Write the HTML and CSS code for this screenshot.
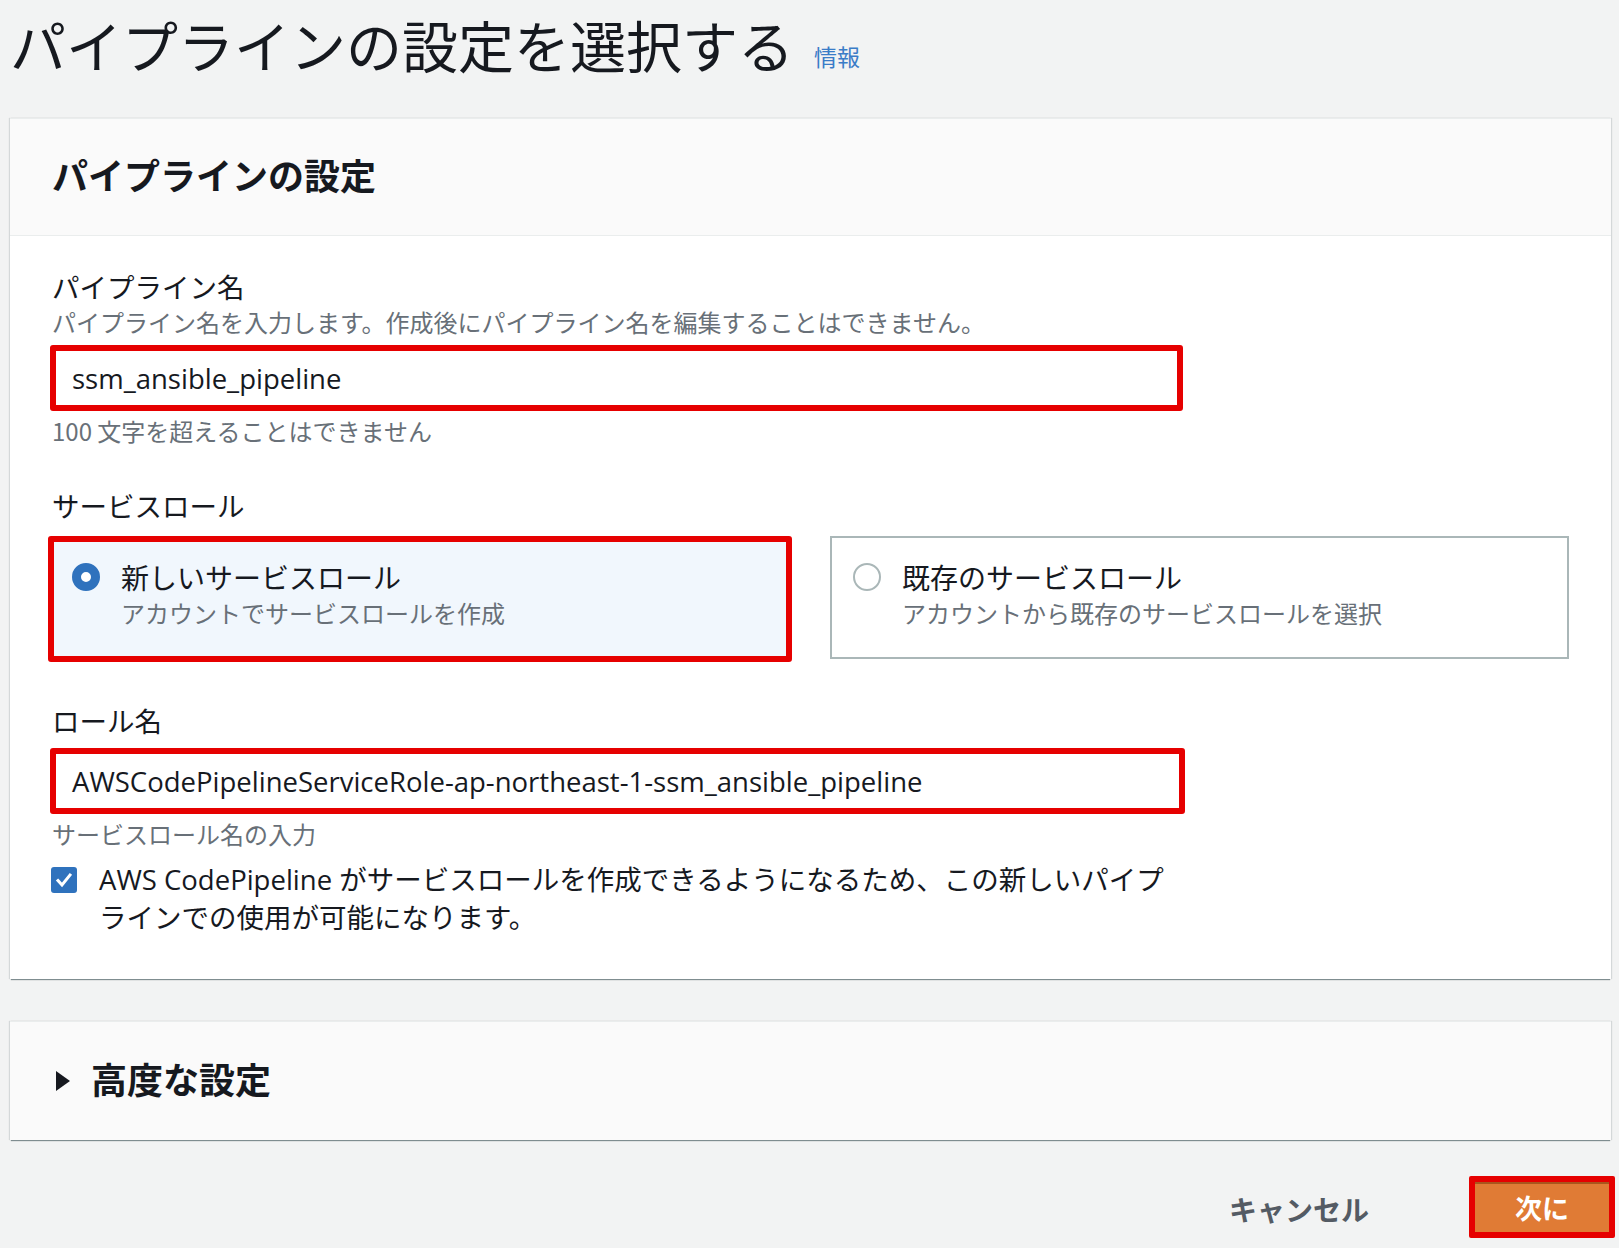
FILE: index.html
```html
<!DOCTYPE html>
<html lang="ja">
<head>
<meta charset="utf-8">
<title>パイプラインの設定を選択する</title>
<link rel="stylesheet" href="styles.css">
</head>
<body>
<div class="page">
  <header class="page-head">
    <h1 class="page-title">パイプラインの設定を選択する</h1>
    <a class="info-link" href="#">情報</a>
  </header>

  <section class="card">
    <div class="card-head">パイプラインの設定</div>
    <div class="card-body">
      <div class="field">
        <div class="label">パイプライン名</div>
        <div class="desc">パイプライン名を入力します。作成後にパイプライン名を編集することはできません。</div>
        <div class="input">ssm_ansible_pipeline</div>
        <div class="hint">100 文字を超えることはできません</div>
      </div>

      <div class="field field-role">
        <div class="label">サービスロール</div>
        <div class="tiles">
          <div class="tile tile-selected">
            <span class="radio radio-on"></span>
            <div class="tile-text">
              <div class="tile-title">新しいサービスロール</div>
              <div class="tile-sub">アカウントでサービスロールを作成</div>
            </div>
          </div>
          <div class="tile tile-plain">
            <span class="radio"></span>
            <div class="tile-text">
              <div class="tile-title">既存のサービスロール</div>
              <div class="tile-sub">アカウントから既存のサービスロールを選択</div>
            </div>
          </div>
        </div>
      </div>

      <div class="field field-rolename">
        <div class="label">ロール名</div>
        <div class="input input-role">AWSCodePipelineServiceRole-ap-northeast-1-ssm_ansible_pipeline</div>
        <div class="hint">サービスロール名の入力</div>
        <div class="check-row">
          <span class="checkbox">
            <svg viewBox="0 0 26 26" width="26" height="26"><path d="M7 13.5l4 4.5 8-10" fill="none" stroke="#fff" stroke-width="3" stroke-linecap="square"/></svg>
          </span>
          <div class="check-text">AWS CodePipeline がサービスロールを作成できるようになるため、この新しいパイプラインでの使用が可能になります。</div>
        </div>
      </div>
    </div>
  </section>

  <section class="card card-collapsed">
    <svg class="caret" viewBox="0 0 16 22" width="16" height="22"><path d="M1 1l14 10L1 21z" fill="#16191f"/></svg>
    <span class="collapsed-title">高度な設定</span>
  </section>

  <footer class="actions">
    <a class="btn-cancel" href="#">キャンセル</a>
    <button class="btn-next" type="button">次に</button>
  </footer>
</div>
</body>
</html>
```

FILE: styles.css
```css
html, body {
  margin: 0;
  padding: 0;
}
body {
  background: #f2f3f3;
  color: #16191f;
  font-family: "Noto Sans CJK JP", "Noto Sans", sans-serif;
}
.page {
  padding: 0 6px 0 10px;
}
.page-head {
  display: flex;
  align-items: flex-end;
  padding-top: 12px;
  margin-bottom: 42px;
  height: 64px;
}
.page-title {
  margin: 0;
  font-size: 56px;
  font-weight: 400;
  line-height: 64px;
}
.info-link {
  margin: 0 0 5px 20px;
  font-size: 23px;
  line-height: 30px;
  color: #3a7cc7;
  text-decoration: none;
}
.card {
  background: #fff;
  width: 1601px;
  border-top: 1px solid #eaeded;
  box-shadow: 0 2px 1px -1px rgba(0, 28, 36, 0.45), 1px 0 1px 0 rgba(0, 28, 36, 0.12), -1px 0 1px 0 rgba(0, 28, 36, 0.12);
}
.card-head {
  box-sizing: border-box;
  background: #fafafa;
  height: 117px;
  border-bottom: 1px solid #eaeded;
  display: flex;
  align-items: center;
  padding: 0 0 7px 42px;
  font-size: 36px;
  font-weight: 700;
}
.card-body {
  padding: 33px 42px 42px 42px;
}
.label {
  font-size: 27.5px;
  line-height: 34px;
}
.desc, .hint {
  font-size: 24px;
  line-height: 36px;
  color: #687078;
}
.desc {
  margin-top: 1px;
}
.input {
  box-sizing: border-box;
  width: 1133px;
  height: 66px;
  margin: 5px 0 0 -2px;
  border: 6px solid #e60000;
  border-radius: 3px;
  padding-left: 16px;
  display: flex;
  align-items: center;
  font-family: "Open Sans", "Noto Sans", sans-serif;
  font-size: 27.5px;
  color: #16191f;
  background: #fff;
}
.hint {
  margin-top: 2px;
}
.field-role {
  margin-top: 39px;
}
.tiles {
  display: grid;
  grid-template-columns: 744px 739px;
  column-gap: 38px;
  margin: 14px 0 0 -4px;
  align-items: start;
}
.tile {
  box-sizing: border-box;
  display: flex;
  align-items: flex-start;
}
.tile-selected {
  border: 6px solid #e60000;
  border-radius: 3px;
  background: #f1f7fd;
  padding: 17px 20px 25px 18px;
}
.tile-plain {
  border: 2px solid #aab7b8;
  background: #fff;
  padding: 21px 20px 26px 21px;
}
.radio {
  box-sizing: border-box;
  flex: none;
  width: 28px;
  height: 28px;
  margin-top: 4px;
  border-radius: 50%;
  border: 2px solid #aab7b8;
  background: #fff;
}
.radio-on {
  border: 9px solid #2f72bd;
}
.tile-text {
  margin-left: 21px;
}
.tile-title {
  font-size: 28px;
  line-height: 36px;
}
.tile-sub {
  font-size: 24px;
  line-height: 36px;
  color: #687078;
}
.field-rolename {
  margin-top: 41px;
}
.field-rolename .input {
  margin-top: 11px;
  width: 1135px;
}
.check-row {
  display: flex;
  align-items: flex-start;
  margin-top: 9px;
}
.checkbox {
  flex: none;
  width: 26px;
  height: 26px;
  margin: 6px 0 0 -1px;
  border-radius: 3px;
  background: #2f72bd;
  display: flex;
}
.check-text {
  margin-left: 22px;
  width: 1090px;
  font-family: "Open Sans", "Noto Sans CJK JP", sans-serif;
  font-size: 27.5px;
  line-height: 38px;
}
.card-collapsed {
  margin-top: 42px;
  height: 119px;
  background: #fafafa;
  display: flex;
  align-items: center;
  padding: 0 0 6px 45px;
  box-sizing: border-box;
}
.caret {
  flex: none;
  margin-top: 5px;
}
.collapsed-title {
  margin-left: 20px;
  font-size: 36px;
  font-weight: 700;
}
.actions {
  display: flex;
  justify-content: flex-end;
  align-items: center;
  margin-top: 36px;
  padding-bottom: 9px;
}
.btn-cancel {
  font-size: 28px;
  font-weight: 700;
  color: #545b64;
  text-decoration: none;
  margin: 4px 100px 0 0;
}
.btn-next {
  box-sizing: border-box;
  width: 146px;
  height: 62px;
  margin-right: -2px;
  border: 6px solid #e60000;
  border-radius: 2px;
  background: #e07b35;
  box-shadow: inset 0 2px 0 #a9561c;
  color: #fff;
  font-family: "Noto Sans CJK JP", sans-serif;
  font-size: 27px;
  font-weight: 700;
  padding: 0;
}
```
